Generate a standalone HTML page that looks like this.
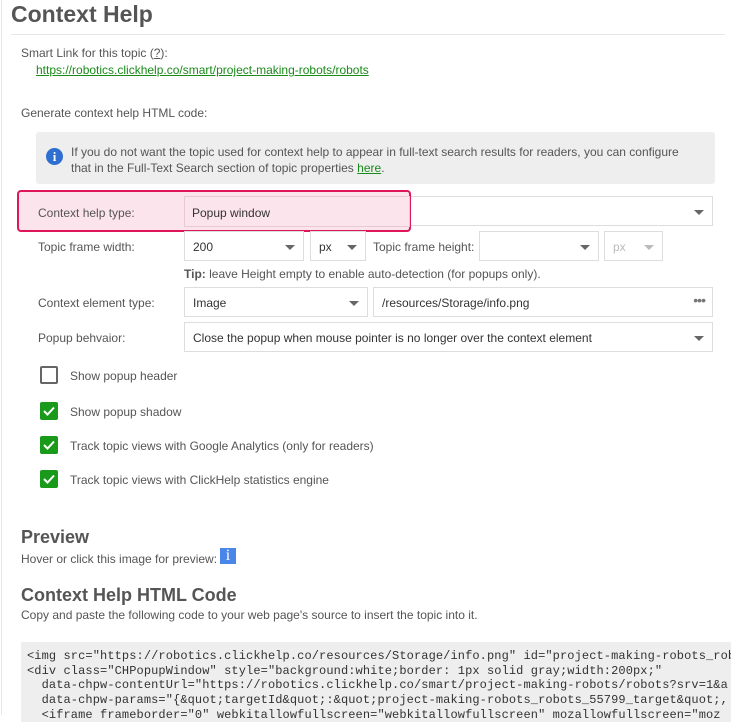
<!DOCTYPE html>
<html><head><meta charset="utf-8"><style>
*{box-sizing:border-box;margin:0;padding:0}
body{width:731px;height:715px;overflow:hidden;background:#fff;font-family:"Liberation Sans",sans-serif;font-size:12px;color:#555;position:relative}
.a{position:absolute;white-space:nowrap}
.box{position:absolute;border:1px solid #ddd;background:#fff;height:30px}
.box span{position:absolute;left:8px;top:8px;color:#333}
.arr{position:absolute;top:13px;width:0;height:0;border-left:5px solid transparent;border-right:5px solid transparent;border-top:5px solid #666}
.cb{position:absolute;left:40px;width:18px;height:18px;border-radius:2px;background:#1a9a1a}
.cb svg{position:absolute;left:2px;top:3px}
pre{position:absolute;left:21px;top:642px;width:710px;height:80px;background:#eee;font-family:"Liberation Mono",monospace;font-size:12px;line-height:14.7px;padding:7px 0 0 6px;color:#333;overflow:hidden;letter-spacing:0.1px}
</style></head><body>
<div class="a" style="left:1px;top:0;width:1px;height:715px;background:#e6e6e6"></div>
<div class="a" style="left:11px;top:1px;font-size:23px;font-weight:bold;color:#555">Context Help</div>
<div class="a" style="left:11px;top:34px;width:714px;height:1px;background:#e6e6e6"></div>
<div class="a" style="left:21px;top:46px">Smart Link for this topic (<u>?</u>):</div>
<div class="a" style="left:36px;top:63px;color:#1a8a1a;text-decoration:underline">https://robotics.clickhelp.co/smart/project-making-robots/robots</div>
<div class="a" style="left:21px;top:106px">Generate context help HTML code:</div>
<div class="a" style="left:36px;top:132px;width:679px;height:52px;background:#eee;border-radius:3px"></div>
<div class="a" style="left:46px;top:148px;width:17px;height:17px;border-radius:50%;background:#2f6fd0;color:#fff;font-weight:bold;font-size:13px;text-align:center;line-height:17px;font-family:'Liberation Serif',serif">i</div>
<div class="a" style="left:71px;top:144px;line-height:16px">If you do not want the topic used for context help to appear in full-text search results for readers, you can configure<br>that in the Full-Text Search section of topic properties <u style="color:#1a8a1a">here</u>.</div>

<div class="box" style="left:184px;top:196px;width:529px"><div class="arr" style="right:8px"></div></div>
<div class="a" style="left:17px;top:190px;width:394px;height:42px;border:2px solid #e0165a;border-radius:4px;background:#fce4ec"></div>
<div class="a" style="left:184px;top:196px;width:226px;height:31px;border:1px solid #e8c8d3;background:#fce4ec"></div>
<div class="a" style="left:38px;top:206px">Context help type:</div>
<div class="a" style="left:192px;top:206px;color:#333">Popup window</div>

<div class="a" style="left:38px;top:240px">Topic frame width:</div>
<div class="box" style="left:184px;top:231px;width:120px"><span>200</span><div class="arr" style="right:8px"></div></div>
<div class="box" style="left:310px;top:231px;width:56px"><span>px</span><div class="arr" style="right:8px"></div></div>
<div class="a" style="left:373px;top:240px">Topic frame height:</div>
<div class="box" style="left:479px;top:231px;width:120px"><div class="arr" style="right:8px"></div></div>
<div class="box" style="left:604px;top:231px;width:59px"><span style="color:#bbb">px</span><div class="arr" style="right:8px;border-top-color:#bbb"></div></div>
<div class="a" style="left:184px;top:267px"><b>Tip:</b> leave Height empty to enable auto-detection (for popups only).</div>

<div class="a" style="left:38px;top:296px">Context element type:</div>
<div class="box" style="left:184px;top:287px;width:184px"><span>Image</span><div class="arr" style="right:8px"></div></div>
<div class="box" style="left:373px;top:287px;width:340px"><span>/resources/Storage/info.png</span><span style="left:auto;right:7px;top:4px;color:#777;font-size:14px;letter-spacing:-1px">•••</span></div>
<div class="a" style="left:38px;top:331px">Popup behvaior:</div>
<div class="box" style="left:184px;top:322px;width:529px"><span>Close the popup when mouse pointer is no longer over the context element</span><div class="arr" style="right:8px"></div></div>

<div class="a" style="left:40px;top:366px;width:18px;height:18px;border:2px solid #666;border-radius:2px"></div>
<div class="a" style="left:70px;top:369px">Show popup header</div>
<div class="cb" style="top:402px"><svg width="14" height="12"><path d="M2 6l3.5 3.5L12 2.5" stroke="#fff" stroke-width="2" fill="none"/></svg></div>
<div class="a" style="left:70px;top:405px">Show popup shadow</div>
<div class="cb" style="top:436px"><svg width="14" height="12"><path d="M2 6l3.5 3.5L12 2.5" stroke="#fff" stroke-width="2" fill="none"/></svg></div>
<div class="a" style="left:70px;top:439px">Track topic views with Google Analytics (only for readers)</div>
<div class="cb" style="top:470px"><svg width="14" height="12"><path d="M2 6l3.5 3.5L12 2.5" stroke="#fff" stroke-width="2" fill="none"/></svg></div>
<div class="a" style="left:70px;top:473px">Track topic views with ClickHelp statistics engine</div>

<div class="a" style="left:21px;top:527px;font-size:18px;font-weight:bold;color:#555">Preview</div>
<div class="a" style="left:21px;top:552px">Hover or click this image for preview:</div>
<div class="a" style="left:220px;top:548px;width:16px;height:16px;background:#4a86e8;color:#fff;font-family:'Liberation Serif',serif;font-size:16px;text-align:center;line-height:16px">i</div>
<div class="a" style="left:21px;top:585px;font-size:18px;font-weight:bold;color:#555">Context Help HTML Code</div>
<div class="a" style="left:21px;top:608px">Copy and paste the following code to your web page's source to insert the topic into it.</div>
<pre>&lt;img src="https://robotics.clickhelp.co/resources/Storage/info.png" id="project-making-robots_robots
&lt;div class="CHPopupWindow" style="background:white;border: 1px solid gray;width:200px;"
  data-chpw-contentUrl="https://robotics.clickhelp.co/smart/project-making-robots/robots?srv=1&amp;a
  data-chpw-params="{&amp;quot;targetId&amp;quot;:&amp;quot;project-making-robots_robots_55799_target&amp;quot;,
  &lt;iframe frameborder="0" webkitallowfullscreen="webkitallowfullscreen" mozallowfullscreen="moz</pre>
</body></html>
